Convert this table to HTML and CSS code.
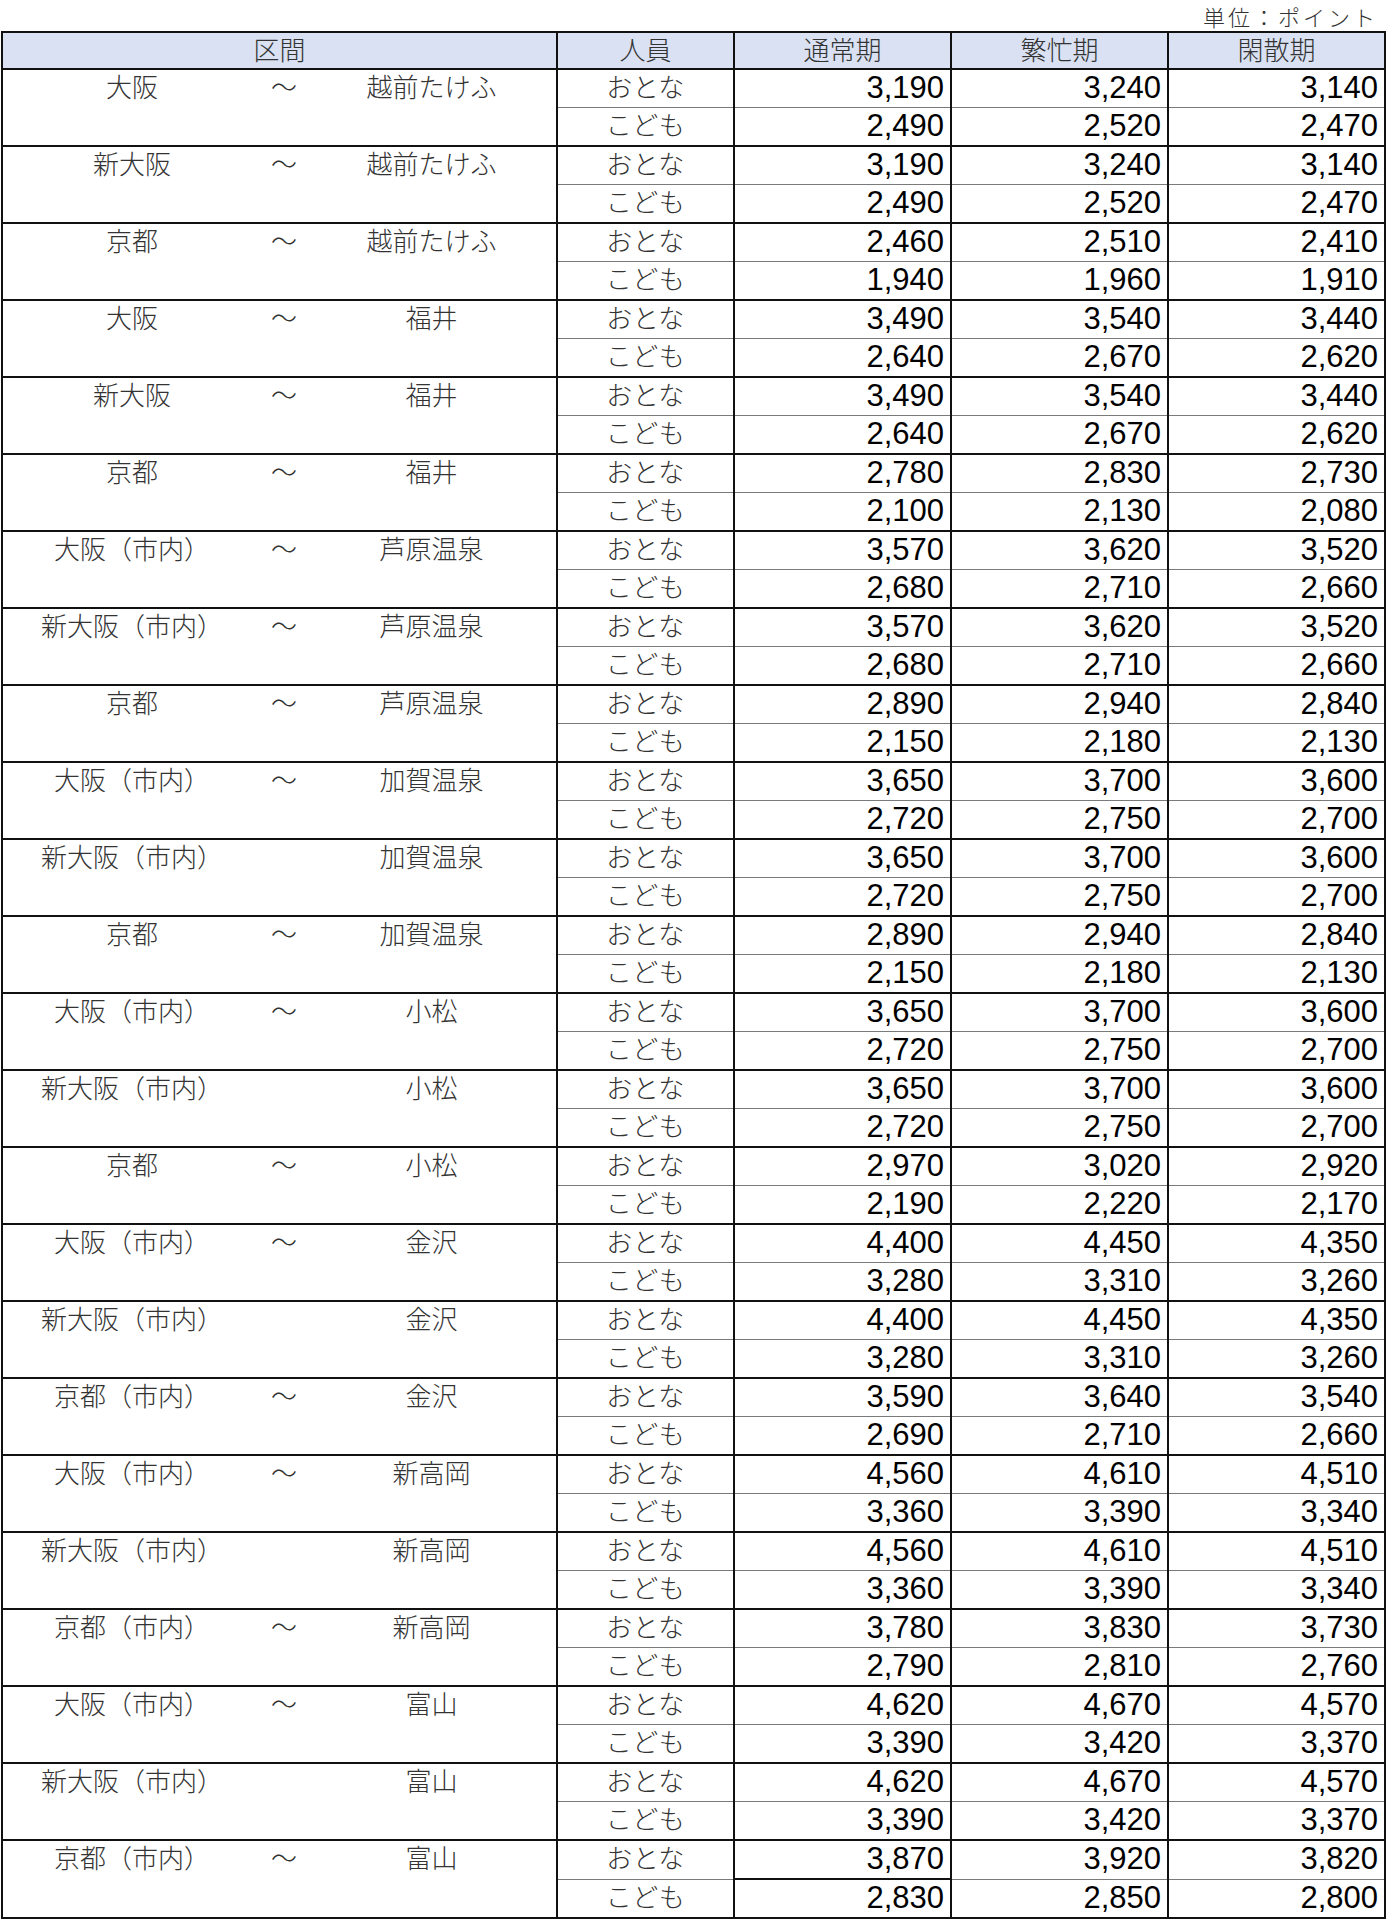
FILE: index.html
```html
<!DOCTYPE html>
<html lang="ja">
<head>
<meta charset="utf-8">
<title>区間別ポイント表</title>
<link rel="stylesheet" href="styles.css">
</head>
<body>
<div class="unit">単位：ポイント</div>
<table class="fares">
<colgroup>
<col class="c-sec"><col class="c-per"><col class="c-num"><col class="c-num"><col class="c-num">
</colgroup>
<thead>
<tr><th>区間</th><th>人員</th><th>通常期</th><th>繁忙期</th><th>閑散期</th></tr>
</thead>
<tbody>
<tr class="a"><td class="sec" rowspan="2"><div class="route"><span>大阪</span><span>～</span><span>越前たけふ</span></div></td><td class="per">おとな</td><td class="num">3,190</td><td class="num">3,240</td><td class="num">3,140</td></tr>
<tr class="c"><td class="per">こども</td><td class="num">2,490</td><td class="num">2,520</td><td class="num">2,470</td></tr>
<tr class="a"><td class="sec" rowspan="2"><div class="route"><span>新大阪</span><span>～</span><span>越前たけふ</span></div></td><td class="per">おとな</td><td class="num">3,190</td><td class="num">3,240</td><td class="num">3,140</td></tr>
<tr class="c"><td class="per">こども</td><td class="num">2,490</td><td class="num">2,520</td><td class="num">2,470</td></tr>
<tr class="a"><td class="sec" rowspan="2"><div class="route"><span>京都</span><span>～</span><span>越前たけふ</span></div></td><td class="per">おとな</td><td class="num">2,460</td><td class="num">2,510</td><td class="num">2,410</td></tr>
<tr class="c"><td class="per">こども</td><td class="num">1,940</td><td class="num">1,960</td><td class="num">1,910</td></tr>
<tr class="a"><td class="sec" rowspan="2"><div class="route"><span>大阪</span><span>～</span><span>福井</span></div></td><td class="per">おとな</td><td class="num">3,490</td><td class="num">3,540</td><td class="num">3,440</td></tr>
<tr class="c"><td class="per">こども</td><td class="num">2,640</td><td class="num">2,670</td><td class="num">2,620</td></tr>
<tr class="a"><td class="sec" rowspan="2"><div class="route"><span>新大阪</span><span>～</span><span>福井</span></div></td><td class="per">おとな</td><td class="num">3,490</td><td class="num">3,540</td><td class="num">3,440</td></tr>
<tr class="c"><td class="per">こども</td><td class="num">2,640</td><td class="num">2,670</td><td class="num">2,620</td></tr>
<tr class="a"><td class="sec" rowspan="2"><div class="route"><span>京都</span><span>～</span><span>福井</span></div></td><td class="per">おとな</td><td class="num">2,780</td><td class="num">2,830</td><td class="num">2,730</td></tr>
<tr class="c"><td class="per">こども</td><td class="num">2,100</td><td class="num">2,130</td><td class="num">2,080</td></tr>
<tr class="a"><td class="sec" rowspan="2"><div class="route"><span>大阪（市内）</span><span>～</span><span>芦原温泉</span></div></td><td class="per">おとな</td><td class="num">3,570</td><td class="num">3,620</td><td class="num">3,520</td></tr>
<tr class="c"><td class="per">こども</td><td class="num">2,680</td><td class="num">2,710</td><td class="num">2,660</td></tr>
<tr class="a"><td class="sec" rowspan="2"><div class="route"><span>新大阪（市内）</span><span>～</span><span>芦原温泉</span></div></td><td class="per">おとな</td><td class="num">3,570</td><td class="num">3,620</td><td class="num">3,520</td></tr>
<tr class="c"><td class="per">こども</td><td class="num">2,680</td><td class="num">2,710</td><td class="num">2,660</td></tr>
<tr class="a"><td class="sec" rowspan="2"><div class="route"><span>京都</span><span>～</span><span>芦原温泉</span></div></td><td class="per">おとな</td><td class="num">2,890</td><td class="num">2,940</td><td class="num">2,840</td></tr>
<tr class="c"><td class="per">こども</td><td class="num">2,150</td><td class="num">2,180</td><td class="num">2,130</td></tr>
<tr class="a"><td class="sec" rowspan="2"><div class="route"><span>大阪（市内）</span><span>～</span><span>加賀温泉</span></div></td><td class="per">おとな</td><td class="num">3,650</td><td class="num">3,700</td><td class="num">3,600</td></tr>
<tr class="c"><td class="per">こども</td><td class="num">2,720</td><td class="num">2,750</td><td class="num">2,700</td></tr>
<tr class="a"><td class="sec" rowspan="2"><div class="route"><span>新大阪（市内）</span><span></span><span>加賀温泉</span></div></td><td class="per">おとな</td><td class="num">3,650</td><td class="num">3,700</td><td class="num">3,600</td></tr>
<tr class="c"><td class="per">こども</td><td class="num">2,720</td><td class="num">2,750</td><td class="num">2,700</td></tr>
<tr class="a"><td class="sec" rowspan="2"><div class="route"><span>京都</span><span>～</span><span>加賀温泉</span></div></td><td class="per">おとな</td><td class="num">2,890</td><td class="num">2,940</td><td class="num">2,840</td></tr>
<tr class="c"><td class="per">こども</td><td class="num">2,150</td><td class="num">2,180</td><td class="num">2,130</td></tr>
<tr class="a"><td class="sec" rowspan="2"><div class="route"><span>大阪（市内）</span><span>～</span><span>小松</span></div></td><td class="per">おとな</td><td class="num">3,650</td><td class="num">3,700</td><td class="num">3,600</td></tr>
<tr class="c"><td class="per">こども</td><td class="num">2,720</td><td class="num">2,750</td><td class="num">2,700</td></tr>
<tr class="a"><td class="sec" rowspan="2"><div class="route"><span>新大阪（市内）</span><span></span><span>小松</span></div></td><td class="per">おとな</td><td class="num">3,650</td><td class="num">3,700</td><td class="num">3,600</td></tr>
<tr class="c"><td class="per">こども</td><td class="num">2,720</td><td class="num">2,750</td><td class="num">2,700</td></tr>
<tr class="a"><td class="sec" rowspan="2"><div class="route"><span>京都</span><span>～</span><span>小松</span></div></td><td class="per">おとな</td><td class="num">2,970</td><td class="num">3,020</td><td class="num">2,920</td></tr>
<tr class="c"><td class="per">こども</td><td class="num">2,190</td><td class="num">2,220</td><td class="num">2,170</td></tr>
<tr class="a"><td class="sec" rowspan="2"><div class="route"><span>大阪（市内）</span><span>～</span><span>金沢</span></div></td><td class="per">おとな</td><td class="num">4,400</td><td class="num">4,450</td><td class="num">4,350</td></tr>
<tr class="c"><td class="per">こども</td><td class="num">3,280</td><td class="num">3,310</td><td class="num">3,260</td></tr>
<tr class="a"><td class="sec" rowspan="2"><div class="route"><span>新大阪（市内）</span><span></span><span>金沢</span></div></td><td class="per">おとな</td><td class="num">4,400</td><td class="num">4,450</td><td class="num">4,350</td></tr>
<tr class="c"><td class="per">こども</td><td class="num">3,280</td><td class="num">3,310</td><td class="num">3,260</td></tr>
<tr class="a"><td class="sec" rowspan="2"><div class="route"><span>京都（市内）</span><span>～</span><span>金沢</span></div></td><td class="per">おとな</td><td class="num">3,590</td><td class="num">3,640</td><td class="num">3,540</td></tr>
<tr class="c"><td class="per">こども</td><td class="num">2,690</td><td class="num">2,710</td><td class="num">2,660</td></tr>
<tr class="a"><td class="sec" rowspan="2"><div class="route"><span>大阪（市内）</span><span>～</span><span>新高岡</span></div></td><td class="per">おとな</td><td class="num">4,560</td><td class="num">4,610</td><td class="num">4,510</td></tr>
<tr class="c"><td class="per">こども</td><td class="num">3,360</td><td class="num">3,390</td><td class="num">3,340</td></tr>
<tr class="a"><td class="sec" rowspan="2"><div class="route"><span>新大阪（市内）</span><span></span><span>新高岡</span></div></td><td class="per">おとな</td><td class="num">4,560</td><td class="num">4,610</td><td class="num">4,510</td></tr>
<tr class="c"><td class="per">こども</td><td class="num">3,360</td><td class="num">3,390</td><td class="num">3,340</td></tr>
<tr class="a"><td class="sec" rowspan="2"><div class="route"><span>京都（市内）</span><span>～</span><span>新高岡</span></div></td><td class="per">おとな</td><td class="num">3,780</td><td class="num">3,830</td><td class="num">3,730</td></tr>
<tr class="c"><td class="per">こども</td><td class="num">2,790</td><td class="num">2,810</td><td class="num">2,760</td></tr>
<tr class="a"><td class="sec" rowspan="2"><div class="route"><span>大阪（市内）</span><span>～</span><span>富山</span></div></td><td class="per">おとな</td><td class="num">4,620</td><td class="num">4,670</td><td class="num">4,570</td></tr>
<tr class="c"><td class="per">こども</td><td class="num">3,390</td><td class="num">3,420</td><td class="num">3,370</td></tr>
<tr class="a"><td class="sec" rowspan="2"><div class="route"><span>新大阪（市内）</span><span></span><span>富山</span></div></td><td class="per">おとな</td><td class="num">4,620</td><td class="num">4,670</td><td class="num">4,570</td></tr>
<tr class="c"><td class="per">こども</td><td class="num">3,390</td><td class="num">3,420</td><td class="num">3,370</td></tr>
<tr class="a"><td class="sec" rowspan="2"><div class="route"><span>京都（市内）</span><span>～</span><span>富山</span></div></td><td class="per">おとな</td><td class="num">3,870</td><td class="num">3,920</td><td class="num">3,820</td></tr>
<tr class="c"><td class="per">こども</td><td class="num">2,830</td><td class="num">2,850</td><td class="num">2,800</td></tr>
</tbody>
</table>
</body>
</html>
```
FILE: styles.css
```css
html, body {
  margin: 0;
  padding: 0;
  background: #ffffff;
}
body {
  font-family: "Noto Sans CJK JP", "Liberation Sans", sans-serif;
  color: #1a1a1a;
}
.unit {
  height: 31px;
  line-height: 32px;
  text-align: right;
  padding-right: 9px;
  font-size: 22px;
  letter-spacing: 3px;
  font-weight: 300;
  color: #333;
}
.fares {
  border-collapse: collapse;
  table-layout: fixed;
  width: 1383px;
  margin-left: 1px;
  border: 2px solid #111;
}
.c-sec { width: 555px; }
.c-per { width: 177px; }
.c-num { width: 217px; }
.fares th, .fares td {
  padding: 0;
  vertical-align: top;
  border-left: 2px solid #111;
  border-right: 2px solid #111;
}
.fares th {
  height: 35px;
  background: #d9e1f2;
  font-weight: 300;
  font-size: 26px;
  line-height: 31px;
  color: #333;
  text-align: center;
  border-bottom: 2px solid #111;
}
.fares tr.a td {
  height: 37px;
  border-top: 2px solid #111;
  border-bottom: 1px solid #7a7a7a;
}
.fares tr.c td {
  height: 37px;
  border-bottom: 2px solid #111;
}
.fares td.sec {
  border-bottom: 2px solid #111;
}
.route {
  display: grid;
  grid-template-columns: 258px 46px 1fr;
  line-height: 32px;
  font-size: 26px;
  font-weight: 300;
  color: #333;
}
.route span {
  text-align: center;
  white-space: nowrap;
}
.fares td.per {
  text-align: center;
  font-size: 26px;
  line-height: 32px;
  font-weight: 300;
  color: #333;
  letter-spacing: 0.5px;
}
.fares td.num {
  text-align: right;
  padding-right: 6px;
  font-family: "Liberation Sans", Arial, sans-serif;
  font-size: 31px;
  line-height: 36px;
  color: #000;
}
.fares tbody tr:last-child td.num:nth-child(2) {
  border-top: 2px solid #111;
}
```
